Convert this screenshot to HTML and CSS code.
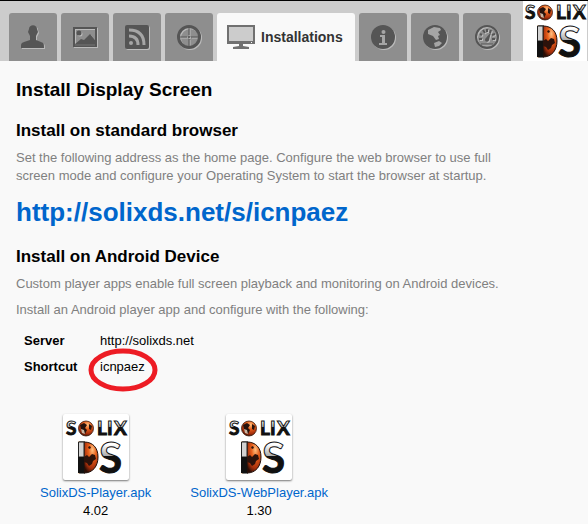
FILE: index.html
```html
<!DOCTYPE html>
<html lang="en">
<head>
<meta charset="utf-8">
<title>Installations</title>
<link rel="stylesheet" href="styles.css">
</head>
<body>
<svg class="defs" aria-hidden="true">
  <defs>
    <linearGradient id="letter" x1="0" y1="0" x2="0" y2="1">
      <stop offset="0.25" stop-color="#fff"/><stop offset="0.48" stop-color="#aaa"/><stop offset="0.49" stop-color="#111"/>
    </linearGradient>
    <radialGradient id="lava" cx="0.6" cy="0.25" r="0.8">
      <stop offset="0" stop-color="#ffc080"/><stop offset="0.35" stop-color="#e8601c"/><stop offset="0.75" stop-color="#a52f0c"/><stop offset="1" stop-color="#2a0d05"/>
    </radialGradient>
    <clipPath id="stem"><path d="M12 20h9v40h-9z"/></clipPath>
    <symbol id="logo" viewBox="0 0 64 60">
      <g class="logo-small">
        <text x="2" y="18">S</text>
        <text x="33" y="18">L</text>
        <text x="43" y="18">I</text>
        <text x="50" y="18">X</text>
      </g>
      <circle cx="22" cy="11.500" r="7.500" fill="url(#lava)" stroke="#3a1a0c" stroke-width="0.800"/>
      <path d="M16 8l4-2 3 2-2 3 2 2-2 4-3-2-1-3zM25 7l3 2-1 4-2-1z" fill="#26120c"/>
      <path d="M17 12l3 1 1 4-3-1z" fill="#c9b4a0"/>
      <g clip-path="url(#stem)"><text class="logo-large" x="12" y="56">D</text></g>
      <path d="M20 25c9 0 14 6 14 15s-5 16-14 16z" fill="url(#lava)" stroke="#21100b"/>
      <path d="M20 40l3-2 2 2 3-3 3 1 1 4-3 2-1 3-3 2-2-3-3-1zM24 30l2-1 1 2-2 1z" fill="#2c120b"/>
      <path d="M14.500 25h5.500v15h-5.500z" fill="#d2d2d2" stroke="#222"/>
      <path d="M14 40h6v16h-6z" fill="#111"/>
      <text class="logo-large" x="35" y="56">S</text>
    </symbol>
  </defs>
</svg>

<header class="topbar">
  <nav class="tabs" aria-label="Sections">
    <a class="tab" href="#users" aria-label="Users">
      <svg class="icon" viewBox="0 0 24 24"><path d="M8 4c0-5 8-5 8 0l1 3-2 4v4l5 2c3 1 3 2 3 6H0c0-4 0-5 3-6l6-2v-4L7 7z"/></svg>
    </a>
    <a class="tab" href="#media" aria-label="Media">
      <svg class="icon" viewBox="0 0 24 24"><path fill-rule="evenodd" d="M0 2h24v20H0zM2 4v15l6-5 3 1 6-6 5 6V4z"/><circle cx="6" cy="8" r="2.500"/><path class="line light" d="M2 20h20"/></svg>
    </a>
    <a class="tab" href="#feeds" aria-label="Feeds">
      <svg class="icon" viewBox="0 0 24 24"><rect width="24" height="24" rx="2"/><circle class="cut" cx="6" cy="18" r="2"/><path class="line cut-line" d="M4 11q9 0 9 9M4 5q15 0 15 15"/></svg>
    </a>
    <a class="tab" href="#targets" aria-label="Targets">
      <svg class="icon" viewBox="0 0 24 24"><circle class="ring" cx="12" cy="12" r="10.500"/><path class="line" d="M12 2v8M12 14v8M2 12h8M14 12h8"/><circle cx="12" cy="12" r="1"/></svg>
    </a>
    <a class="tab tab-active" href="#installations" aria-current="page">
      <svg class="monitor" viewBox="0 0 28 24"><rect x="1" y="1" width="26" height="17" fill="#ccc" stroke="#707070" stroke-width="2"/><path d="M2 16h24v3H2zM12 19h4v2l6 1v2H6v-2l6-1z" fill="#707070"/><path d="M24 17h1v1h-1z" fill="#fff"/></svg>
      <span>Installations</span>
    </a>
    <a class="tab" href="#info" aria-label="Information">
      <svg class="icon" viewBox="0 0 24 24"><circle cx="12" cy="12" r="12"/><circle class="cut" cx="12.500" cy="7" r="2"/><path class="cut" d="M9 10h5v8h2v2H8v-2h3v-6H9z"/></svg>
    </a>
    <a class="tab" href="#world" aria-label="World">
      <svg class="icon" viewBox="0 0 24 24"><circle cx="12" cy="12" r="12"/><path class="cut" d="M5 5l6-3 6 1 1 2-3 2 2 3-2 1 1 3-3 1-3-4-5-2zM11 18l5-2 3 2-3 3-4 1z"/></svg>
    </a>
    <a class="tab" href="#dashboard" aria-label="Dashboard">
      <svg class="icon" viewBox="0 0 24 24"><circle class="ring thin" cx="12" cy="12" r="11"/><path class="line ticks" d="M4 14h3M5 9l2 1M8 5l2 3M12 4v3M16 5l-1 3M20 9l-3 1M20 14h-3"/><path d="M16 7l-2 8a2 2 0 1 1-3-2z"/><path class="line" d="M6 19h12"/></svg>
    </a>
  </nav>
  <svg class="brand" viewBox="0 0 64 60" role="img" aria-label="Solix DS"><use href="#logo"/></svg>
</header>

<main class="content">
  <h1>Install Display Screen</h1>

  <h2>Install on standard browser</h2>
  <p>Set the following address as the home page. Configure the web browser to use full screen mode and configure your Operating System to start the browser at startup.</p>
  <a class="address" href="http://solixds.net/s/icnpaez">http://solixds.net/s/icnpaez</a>

  <h2>Install on Android Device</h2>
  <p>Custom player apps enable full screen playback and monitoring on Android devices.</p>
  <p>Install an Android player app and configure with the following:</p>

  <table class="settings">
    <tr><th scope="row">Server</th><td>http://solixds.net</td></tr>
    <tr><th scope="row">Shortcut</th><td><span class="marked">icnpaez<svg class="mark" viewBox="0 0 70 44" aria-hidden="true"><ellipse cx="35" cy="22" rx="32" ry="19"/></svg></span></td></tr>
  </table>

  <div class="downloads">
    <figure>
      <svg class="app" viewBox="0 0 64 60" aria-hidden="true"><use href="#logo"/></svg>
      <figcaption><a href="#player">SolixDS-Player.apk</a><span>4.02</span></figcaption>
    </figure>
    <figure>
      <svg class="app" viewBox="0 0 64 60" aria-hidden="true"><use href="#logo"/></svg>
      <figcaption><a href="#webplayer">SolixDS-WebPlayer.apk</a><span>1.30</span></figcaption>
    </figure>
  </div>
</main>
</body>
</html>
```
FILE: styles.css
```css
* { box-sizing: border-box; }

body {
  margin: 0;
  background: #f9f9f9;
  color: #000;
  font: 13px/18px "Liberation Sans", Arial, sans-serif;
}

a { color: #0066cc; text-decoration: none; }

.defs { position: absolute; width: 0; height: 0; }

.topbar {
  display: flex;
  justify-content: space-between;
  align-items: flex-end;
  padding: 0 1px 0 9px;
  border-top: 1px solid #000;
  background: #ccc;
}

.tabs { display: flex; gap: 4px; }

.tab {
  display: flex;
  align-items: center;
  justify-content: center;
  width: 48px;
  height: 48px;
  border-radius: 3px 3px 0 0;
  background: #8e8e8e;
}

.tab-active {
  gap: 6px;
  width: auto;
  padding: 0 12px 0 10px;
  background: #f9f9f9;
  color: #333;
  font-size: 14px;
  font-weight: bold;
}

.icon {
  width: 24px;
  height: 24px;
  overflow: visible;
  fill: #555;
  filter: drop-shadow(1px 1px 0 #bbb);
}

.monitor { width: 28px; height: 24px; }

.line { fill: none; stroke: #555; stroke-width: 1; }
.light { stroke: #777; }
.ticks { stroke-width: 2; }
.cut { fill: #a5a5a5; }
.cut-line { stroke: #a5a5a5; stroke-width: 3; }
.ring { fill: none; stroke: #555; stroke-width: 3; }
.thin { stroke-width: 2; }

.brand { display: block; width: 64px; height: 60px; background: #fff; }

.logo-small, .logo-large {
  fill: url(#letter);
  stroke: #111;
  stroke-width: 1;
  font-family: Lato, sans-serif;
  font-weight: bold;
}

.logo-small { font-size: 19px; }
.logo-large { font-size: 42px; }

.content { padding: 18px 16px 0; }

h1, h2, p { margin: 0; }

h1 { font-size: 19px; line-height: 22px; margin-bottom: 20px; }
h2 { font-size: 17px; line-height: 20px; margin-bottom: 8px; }

p { max-width: 500px; margin-bottom: 8px; color: #808080; }

.address {
  display: block;
  margin: 12px 0 20px;
  font-size: 26px;
  line-height: 30px;
  font-weight: bold;
}

.settings { margin: 9px 0 0 8px; border-spacing: 0; }
.settings th, .settings td { padding: 4px 0; text-align: left; }
.settings th { width: 76px; }

.marked { position: relative; }

.mark {
  position: absolute;
  left: -12px;
  top: -11px;
  width: 70px;
  height: 44px;
  fill: none;
  stroke: #ed1c24;
  stroke-width: 5;
}

.downloads { display: flex; gap: 39px; margin: 34px 0 0 24px; }

figure { display: flex; flex-direction: column; align-items: center; gap: 4px; margin: 0; }

figcaption { display: flex; flex-direction: column; align-items: center; }

.app {
  width: 66px;
  height: 66px;
  padding: 1px;
  border-radius: 2px;
  background: #fff;
  box-shadow: 0 1px 2px #777;
}
```
